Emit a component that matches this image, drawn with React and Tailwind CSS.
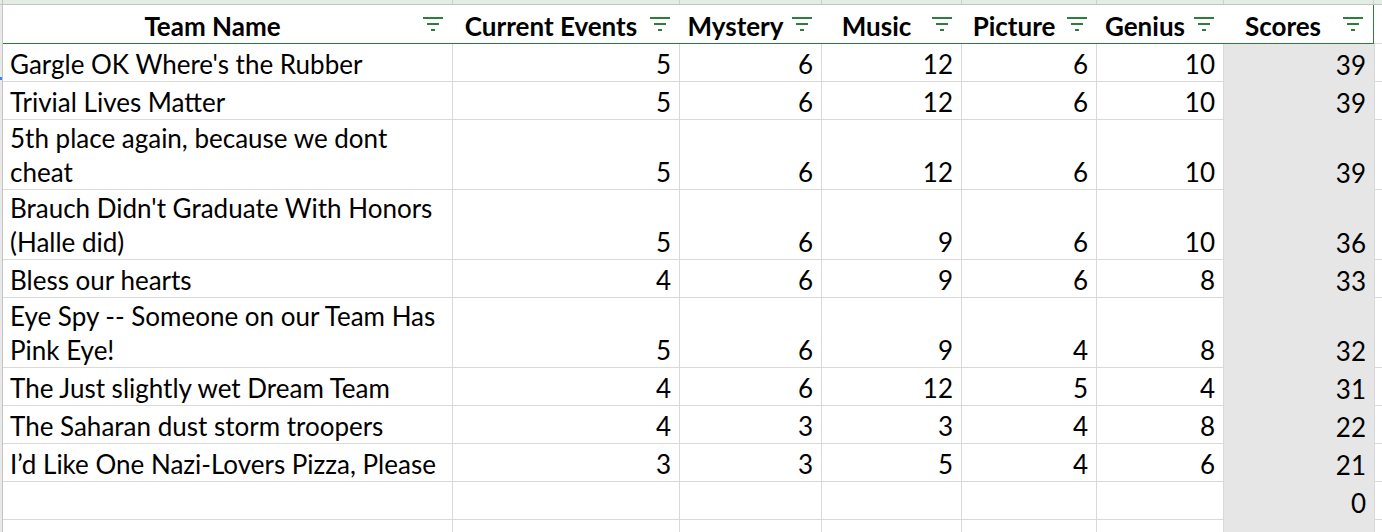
import React from 'react';

const cols = [
  { key: 'team', label: 'Team Name', w: 'w-[450px]' },
  { key: 'ce', label: 'Current Events', w: 'w-[227px]' },
  { key: 'my', label: 'Mystery', w: 'w-[142px]' },
  { key: 'mu', label: 'Music', w: 'w-[140px]' },
  { key: 'pi', label: 'Picture', w: 'w-[135px]' },
  { key: 'ge', label: 'Genius', w: 'w-[127px]' },
  { key: 'sc', label: 'Scores', w: 'w-[150px]' },
];

const rows = [
  ["Gargle OK Where's the Rubber", 5, 6, 12, 6, 10, 39],
  ['Trivial Lives Matter', 5, 6, 12, 6, 10, 39],
  ['5th place again, because we dont cheat', 5, 6, 12, 6, 10, 39],
  ["Brauch Didn't Graduate With Honors (Halle did)", 5, 6, 9, 6, 10, 36],
  ['Bless our hearts', 4, 6, 9, 6, 8, 33],
  ['Eye Spy -- Someone on our Team Has Pink Eye!', 5, 6, 9, 4, 8, 32],
  ['The Just slightly wet Dream Team', 4, 6, 12, 5, 4, 31],
  ['The Saharan dust storm troopers', 4, 3, 3, 4, 8, 22],
  ['I’d Like One Nazi-Lovers Pizza, Please', 3, 3, 5, 4, 6, 21],
  ['', '', '', '', '', '', 0],
  ['', '', '', '', '', '', ''],
];

const FilterIcon = () => (
  <svg width="22" height="14" viewBox="0 0 22 14" className="shrink-0">
    <rect x="1" y="0" width="20" height="2" fill="#2f7d3c" />
    <rect x="5" y="6" width="12" height="2" fill="#2f7d3c" />
    <rect x="9" y="12" width="4" height="2" fill="#2f7d3c" />
  </svg>
);

export default function App() {
  return (
    <div
      className="w-[1382px] h-[532px] overflow-hidden bg-white text-black"
      style={{ fontFamily: 'Lato, "Open Sans", sans-serif' }}
    >
      {/* column header strip */}
      <div className="flex h-[5px] border-b border-[#c4c4c4] bg-[#e3ede3]">
        <div className="w-[3px] border-r border-[#c4c4c4] bg-[#e9e9e9]" />
        {cols.map((c) => (
          <div key={c.key} className={`${c.w} border-r border-[#c9d3c9]`} />
        ))}
        <div className="flex-1" />
      </div>

      {/* header row */}
      <div className="flex h-[39px]">
        <div className="w-[3px] border-r border-[#c4c4c4] bg-[#e9e9e9]" />
        {cols.map((c, i) => (
          <div
            key={c.key}
            className={`${c.w} flex items-center border-b border-[#2f7d3c] pr-[9px] ${
              i === cols.length - 1 ? 'border-r' : ''
            }`}
          >
            <span className="flex-1 pt-[3px] text-center text-[26px] font-bold leading-none">
              {c.label}
            </span>
            <FilterIcon />
          </div>
        ))}
        <div className="flex-1 border-b border-[#d9d9d9]" />
      </div>

      {rows.map((r, ri) => (
        <div key={ri} className="relative flex">
          <div className="w-[3px] border-r border-[#c4c4c4] bg-[#e9e9e9]" />
          {ri === 0 && <div className="absolute left-0 top-[33px] h-[3px] w-[2px] bg-[#3b82f6]" />}
          {r.map((v, ci) => {
            const isTeam = ci === 0;
            const isScore = ci === 6;
            return (
              <div
                key={ci}
                className={`${cols[ci].w} flex min-h-[38px] items-end text-[26px] leading-[34px] ${
                  isScore
                    ? 'bg-[#e7e6e6]'
                    : 'border-r border-b border-[#d9d9d9]'
                } ${isTeam ? 'pl-[7px] pr-[6px] pt-[1px]' : 'justify-end pr-[8px]'}`}
              >
                {v}
              </div>
            );
          })}
          <div className="flex-1 border-b border-l border-[#d9d9d9]" />
        </div>
      ))}
    </div>
  );
}
